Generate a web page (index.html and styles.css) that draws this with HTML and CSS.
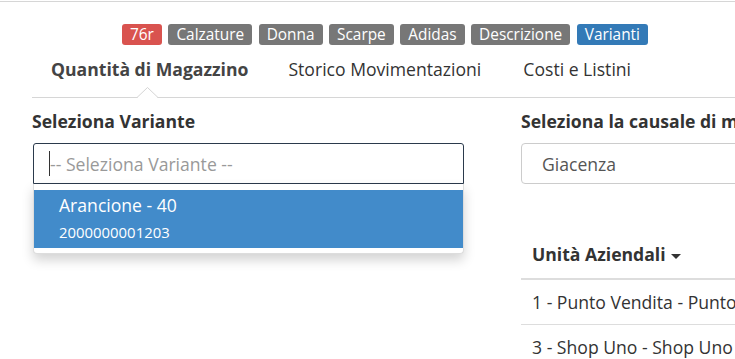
FILE: index.html
```html
<!DOCTYPE html>
<html lang="it">
<head>
<meta charset="utf-8">
<title>Varianti</title>
<link rel="stylesheet" href="styles.css">
</head>
<body>
<div class="page">
  <div class="badges">
    <span class="badge badge-red">76r</span>
    <span class="badge">Calzature</span>
    <span class="badge">Donna</span>
    <span class="badge">Scarpe</span>
    <span class="badge">Adidas</span>
    <span class="badge">Descrizione</span>
    <span class="badge badge-blue">Varianti</span>
  </div>
  <ul class="tabs">
    <li class="tab active">Quantità di Magazzino
      <svg class="tab-arrow" width="21" height="11" viewBox="0 0 21 11"><polygon points="0,11 10.5,0.5 21,11" fill="#fff"/><polyline points="0,10.5 10.5,0.5 21,10.5" fill="none" stroke="#d4d4d4" stroke-width="1"/></svg>
    </li>
    <li class="tab">Storico Movimentazioni</li>
    <li class="tab">Costi e Listini</li>
  </ul>
  <div class="form-row">
    <div class="col-left">
      <div class="label">Seleziona Variante</div>
      <div class="combo">
        <div class="combo-input"><span class="cursor"></span><span class="placeholder">-- Seleziona Variante --</span></div>
        <div class="dropdown">
          <div class="option selected">
            <div class="opt-title">Arancione - 40</div>
            <div class="opt-sub">2000000001203</div>
          </div>
        </div>
      </div>
    </div>
    <div class="col-right">
      <div class="label">Seleziona la causale di movimentazione</div>
      <div class="select">Giacenza</div>
      <table class="units">
        <thead>
          <tr><th>Unità Aziendali <span class="caret"></span></th></tr>
        </thead>
        <tbody>
          <tr><td>1 - Punto Vendita - Punto Vendita</td></tr>
          <tr><td>3 - Shop Uno - Shop Uno</td></tr>
        </tbody>
      </table>
    </div>
  </div>
</div>
</body>
</html>
```

FILE: styles.css
```css
* { box-sizing: border-box; }
html, body { margin: 0; padding: 0; background: #fff; }
body {
  font-family: "Open Sans", "Noto Sans", sans-serif;
  color: #333;
  overflow: hidden;
  width: 735px;
  height: 359px;
}
.page {
  margin-top: 1px;
  border-top: 1px solid #d6d6d6;
  padding-left: 32px;
  width: 900px;
}
.badges {
  display: flex;
  gap: 6.5px;
  padding-left: 90px;
  padding-top: 22px;
}
.badge {
  display: inline-block;
  background: #777;
  color: #fff;
  font-size: 15.4px;
  line-height: 21px;
  height: 21px;
  padding: 0 8px;
  border-radius: 3px;
}
.badge-red { background: #d9534f; }
.badge-blue { background: #337ab7; }
.tabs {
  list-style: none;
  margin: 0;
  padding: 0;
  display: flex;
  border-bottom: 1px solid #d6d6d6;
  height: 53px;
}
.tab {
  position: relative;
  font-size: 17.6px;
  line-height: 25px;
  padding: 12px 21px 0 21px;
  color: #333;
  white-space: nowrap;
}
.tab.active {
  font-weight: 700;
  color: #444;
  padding-left: 19px;
  padding-right: 19px;
}
.tab-arrow {
  position: absolute;
  left: 105px;
  bottom: -1px;
  display: block;
}
.form-row {
  display: grid;
  grid-template-columns: 432px 1fr;
  column-gap: 57px;
  padding-top: 11px;
}
.col-left { padding-left: 1px; }
.label {
  font-weight: 700;
  font-size: 17.6px;
  line-height: 25px;
  color: #333;
  white-space: nowrap;
}
.col-left .label { margin-left: -1px; }
.combo {
  position: relative;
  margin-top: 9px;
}
.combo-input {
  height: 41px;
  border: 1px solid #2b3a4c;
  border-radius: 3px 3px 0 0;
  padding-left: 15px;
  display: flex;
  align-items: center;
}
.cursor {
  width: 1px;
  height: 25px;
  background: #333;
}
.placeholder {
  font-size: 17.6px;
  color: #999;
}
.dropdown {
  position: absolute;
  left: 0;
  right: 0;
  top: 41px;
  background: #fff;
  border: 1px solid #ddd;
  border-top: none;
  border-radius: 0 0 4px 4px;
  box-shadow: 0 6px 12px rgba(0,0,0,0.175);
  padding: 6px 0 5px;
}
.option.selected {
  background: #428bca;
  color: #fff;
  padding: 3px 25px 5px;
}
.opt-title { font-size: 17.6px; line-height: 25px; }
.opt-sub { font-size: 14.9px; line-height: 22px; margin-top: 3px; }
.select {
  margin-top: 9px;
  height: 41px;
  border: 1px solid #ccc;
  border-radius: 4px;
  padding-left: 20px;
  display: flex;
  align-items: center;
  font-size: 17.6px;
  color: #555;
  width: 400px;
}
.units {
  border-collapse: collapse;
  margin-top: 50px;
  width: 400px;
  font-size: 17.6px;
}
.units th {
  text-align: left;
  font-weight: 700;
  padding: 8px 11px 11px;
  line-height: 25px;
  border-bottom: 2px solid #ddd;
  white-space: nowrap;
}
.units td {
  padding: 10px 11px 9px;
  line-height: 25px;
  border-bottom: 1px solid #ddd;
  white-space: nowrap;
  color: #333;
}
.caret {
  display: inline-block;
  width: 0;
  height: 0;
  border-left: 5.5px solid transparent;
  border-right: 5.5px solid transparent;
  border-top: 5px solid #333;
  vertical-align: middle;
  margin-left: 1px;
}
```
